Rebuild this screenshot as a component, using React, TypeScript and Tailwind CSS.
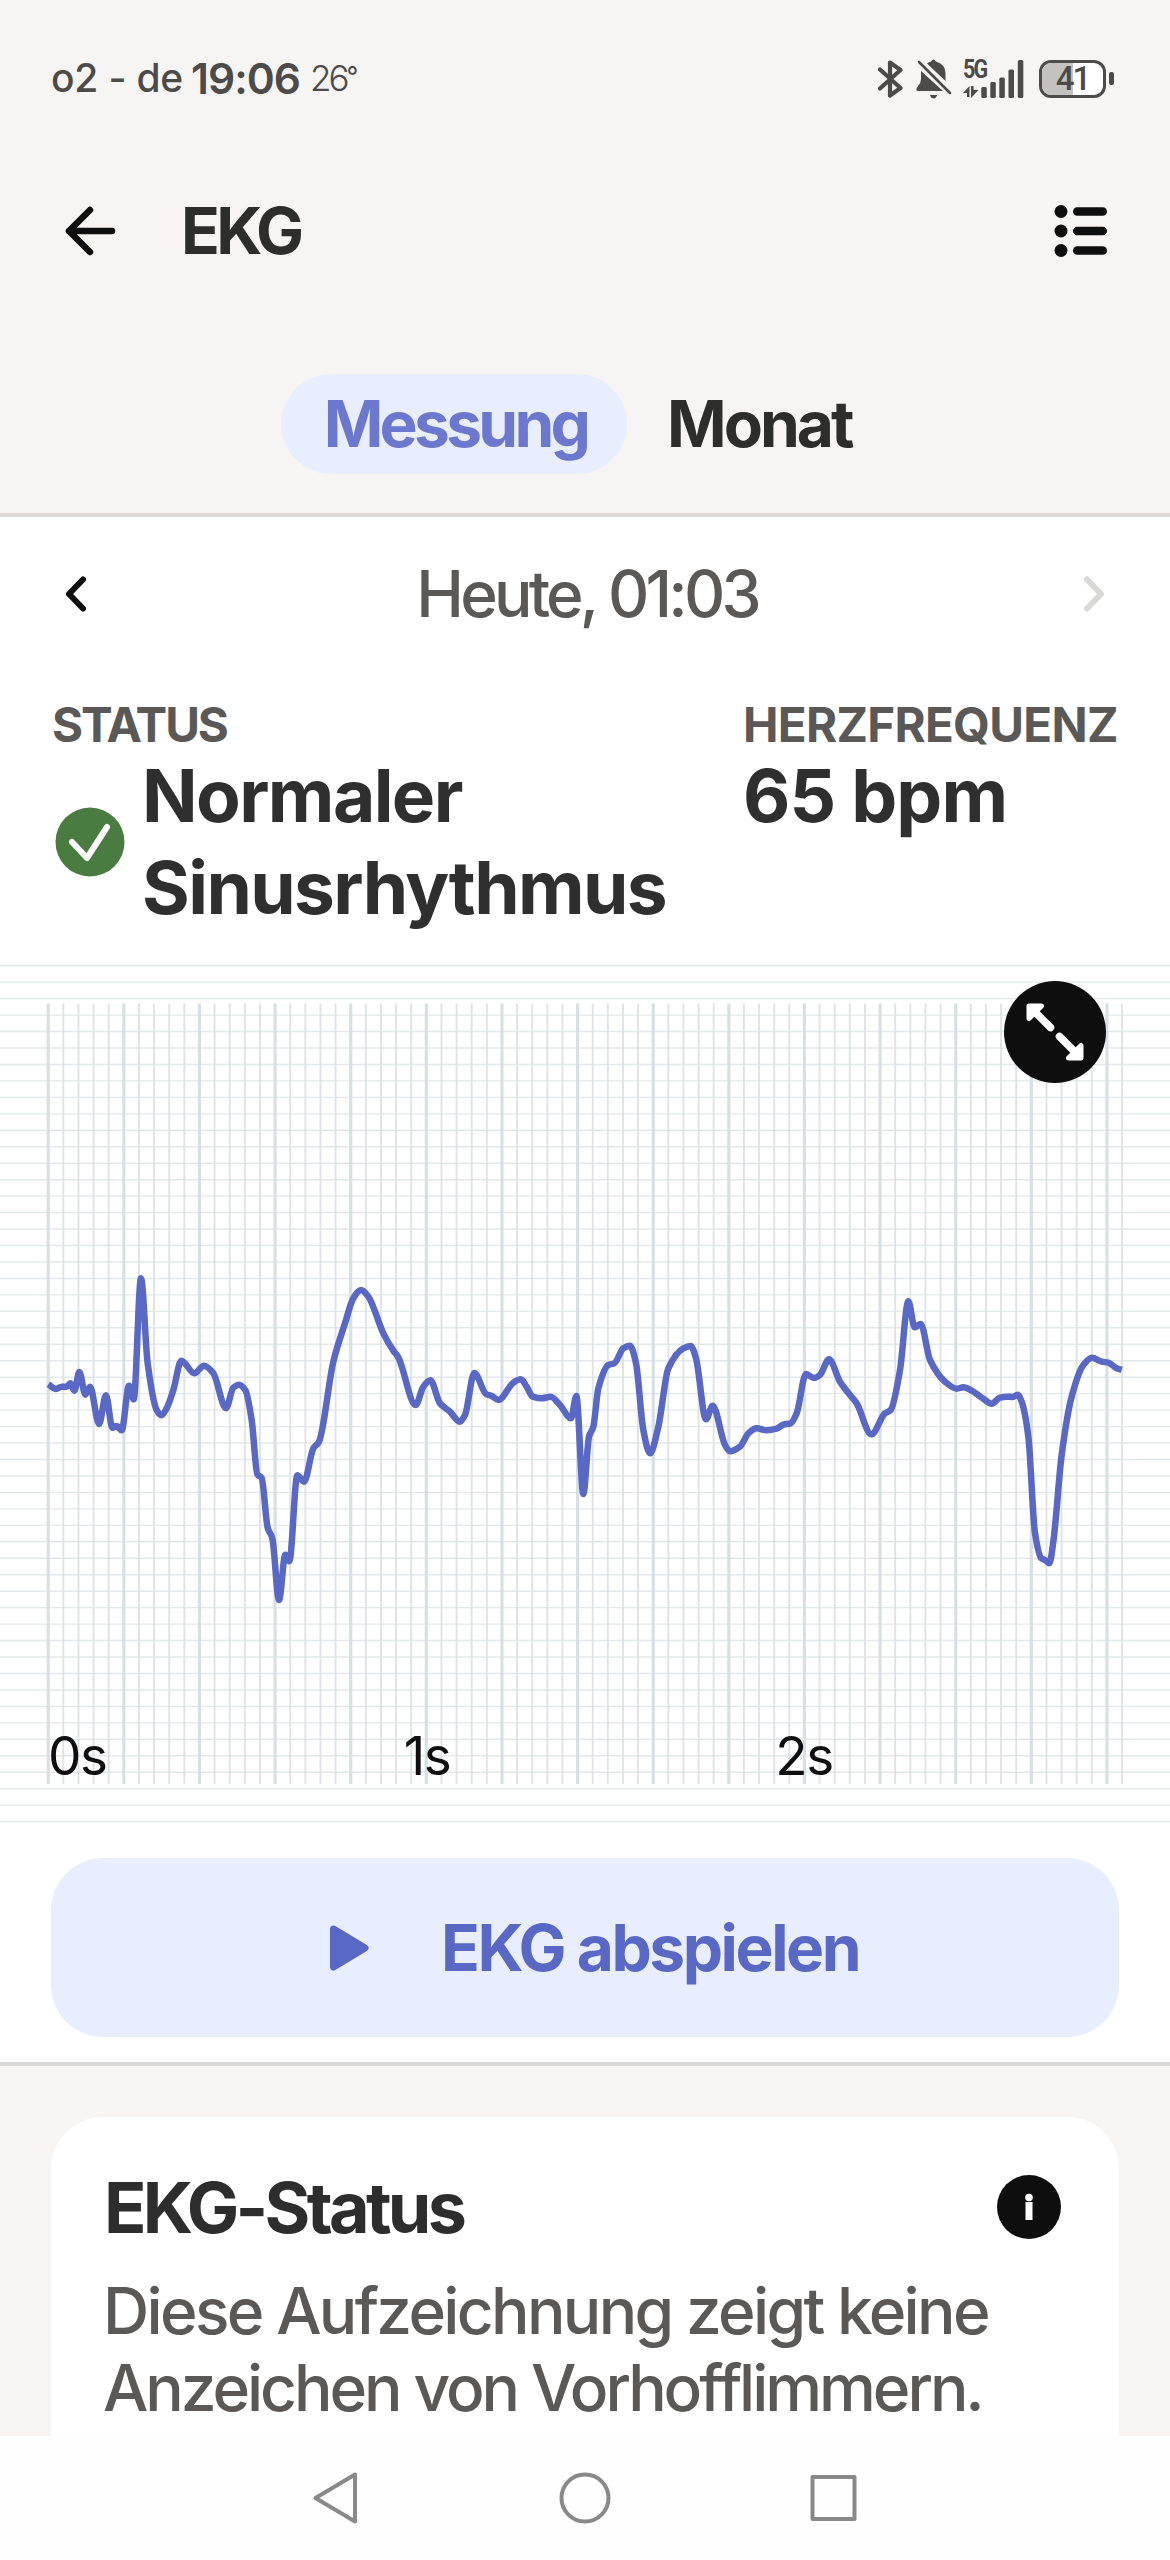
type Point = [number, number];

// ECG samples, three units per pixel, y counted from TRACE_TOP
const TRACE_TOP = 1240;
const samples: Point[] = [
  [145, 433], [168, 447], [185, 440], [200, 440], [211, 430], [223, 452], [238, 396], [256, 464],
  [270, 440], [297, 552], [318, 466], [337, 563], [350, 558], [365, 571], [387, 437], [401, 478],
  [423, 115], [443, 370], [470, 510], [484, 526], [500, 505], [520, 450], [544, 362], [583, 400],
  [612, 377], [640, 400], [678, 505], [700, 443], [717, 434], [736, 450], [755, 540], [772, 703],
  [785, 714], [803, 863], [817, 895], [837, 1080], [856, 944], [868, 964], [892, 706], [912, 725],
  [940, 625], [957, 605], [1000, 365], [1035, 250], [1060, 175], [1083, 150], [1105, 170],
  [1150, 280], [1180, 332], [1195, 352], [1247, 495], [1270, 440], [1291, 421], [1320, 490],
  [1350, 515], [1379, 545], [1395, 525], [1423, 399], [1458, 462], [1475, 468], [1495, 480],
  [1540, 428], [1562, 418], [1580, 440], [1598, 470], [1625, 475], [1652, 470], [1680, 495],
  [1713, 535], [1729, 468], [1750, 762], [1767, 590], [1780, 560], [1795, 445], [1825, 375],
  [1843, 370], [1870, 325], [1890, 317], [1908, 370], [1930, 570], [1950, 640], [1975, 560],
  [2005, 385], [2050, 325], [2072, 318], [2088, 355], [2118, 538], [2138, 497], [2175, 615],
  [2190, 634], [2220, 620], [2245, 580], [2270, 565], [2300, 571], [2330, 566], [2350, 554],
  [2372, 550], [2390, 520], [2418, 402], [2442, 414], [2460, 405], [2487, 358], [2520, 425],
  [2550, 465], [2570, 490], [2614, 583], [2655, 520], [2672, 510], [2700, 390], [2725, 184],
  [2744, 262], [2762, 252], [2790, 360], [2835, 425], [2870, 446], [2890, 442], [2915, 452],
  [2950, 476], [2975, 491], [3000, 473], [3020, 470], [3038, 471], [3053, 464], [3065, 485],
  [3085, 590], [3105, 880], [3124, 955], [3135, 960], [3148, 970], [3160, 905], [3185, 645],
  [3215, 470], [3250, 375], [3276, 353], [3305, 365], [3325, 368], [3350, 385], [3365, 390],
];

// Monotone cubic, so the curve never overshoots a peak
function smoothPath(raw: Point[]) {
  const pts = raw.map(([x, y]) => [x / 3, TRACE_TOP + y / 3]);
  const slopes = pts.slice(1).map((p, i) => (p[1] - pts[i][1]) / (p[0] - pts[i][0]));
  const tangents = pts.map((_, i) => {
    if (i === 0) return slopes[0];
    if (i === pts.length - 1) return slopes[i - 1];
    const a = slopes[i - 1];
    const b = slopes[i];
    return a * b <= 0 ? 0 : (2 * a * b) / (a + b);
  });
  return pts.slice(1).reduce((d, p, i) => {
    const q = pts[i];
    const h = (p[0] - q[0]) / 3;
    return `${d} C${q[0] + h},${q[1] + h * tangents[i]} ${p[0] - h},${p[1] - h * tangents[i + 1]} ${p[0]},${p[1]}`;
  }, `M${pts[0][0]},${pts[0][1]}`);
}

const rows = Array.from({ length: 53 }, (_, i) => 965.7 + i * 16.46);
const columns = Array.from({ length: 72 }, (_, i) => 48.2 + i * 15.125);

function StatusBar() {
  return (
    <div className="h-[157px] pl-[51px] pr-[56px] flex items-center text-[#4c4b49]">
      <span className="text-[39px] font-medium tracking-[-0.2px] w-[140px] whitespace-nowrap">o2 - de</span>
      <span className="text-[42.500px] font-semibold tracking-[-1px] w-[119px] whitespace-nowrap">19:06</span>
      <span className="text-[35px] font-light tracking-[-3px] whitespace-nowrap">26</span>
      <span className="text-[26px] font-normal -mt-[6px]">°</span>
      <div className="ml-auto flex items-center">
        <svg width="25" height="38" viewBox="0 0 25 38" fill="none" stroke="currentColor" strokeWidth="4.200" strokeLinecap="round" strokeLinejoin="round" className="mr-[13px]">
          <path d="M2 9.500 L22.500 28 L12 35.500 V2.500 L22.500 10 L2 28.500" />
        </svg>
        <svg width="36" height="40" viewBox="0 0 36 40" className="mr-[11px]">
          <path d="M5 12 L27 32 H1.5 Q-1 31 2 27 Q5 24 5 20 Z" fill="currentColor" />
          <path d="M11 4.5 Q13 3 15 2.5 Q17.500 -1.500 20 2.500 Q29 5 29.500 14 V22 Z" fill="currentColor" />
          <path d="M3 3 L34 34" stroke="currentColor" strokeWidth="2.6" strokeLinecap="round" />
          <path d="M14 36 H21 Q20 39.500 17.500 39.500 Q15 39.500 14 36 Z" fill="currentColor" />
        </svg>
        <div className="relative mr-[15px]">
          <span className="absolute -top-[3px] left-0 text-[25px] leading-[25px] font-bold tracking-[-2px] origin-left scale-x-[0.86] font-['Roboto',sans-serif]">5G</span>
          <svg width="61" height="38" viewBox="0 0 61 38" fill="currentColor">
            <path d="M0 33 L6.500 26 V37 H4 V33 Z M8 26 H10.500 V30 H15.500 L8 38 Z" />
            <rect x="18.300" y="27" width="5.500" height="11" rx="1.500" />
            <rect x="27.300" y="22" width="5.500" height="16" rx="1.500" />
            <rect x="36.300" y="17.500" width="5.500" height="20.500" rx="1.500" />
            <rect x="45.500" y="9.500" width="5.500" height="28.500" rx="1.500" />
            <rect x="54.800" y="0" width="5.500" height="38" rx="1.500" />
          </svg>
        </div>
        <div className="relative w-[67px] h-[38px] border-[3px] border-current rounded-[12px] overflow-hidden bg-white">
          <div className="h-full w-[31px] bg-[#c3c2c0]"></div>
          <span className="absolute inset-0 flex items-center justify-center text-[33px] font-medium tracking-[-2px] font-['Roboto',sans-serif]">41</span>
        </div>
        <div className="ml-[3px] w-[5px] h-[13px] rounded-[2px] bg-current"></div>
      </div>
    </div>
  );
}

function Header() {
  return (
    <div className="h-[148px] pl-[64px] pr-[62px] flex items-center">
      <svg width="52" height="52" viewBox="0 0 52 52" fill="none" stroke="#0e0e0e" strokeWidth="6.500" strokeLinecap="round" strokeLinejoin="round">
        <path d="M48 26 H5 M26 5 L5 26 L26 47" />
      </svg>
      <h1 className="ml-[65px] text-[64px] font-bold tracking-[-3.700px] text-[#2d2d2b]">EKG</h1>
      <svg width="54" height="54" viewBox="0 0 54 54" fill="#0e0e0e" className="ml-auto">
        {[7.5, 27, 46.5].map((y) => (
          <g key={y}>
            <circle cx="7" cy={y} r="6.500" />
            <rect x="19" y={y - 4.25} width="34" height="8.500" rx="4.250" />
          </g>
        ))}
      </svg>
    </div>
  );
}

function Tabs() {
  return (
    <div className="h-[212px] pt-[69px] pl-[281px] flex items-start border-b-[4px] border-[#dcdbd9] text-[64px] font-bold">
      <div className="w-[346px] h-[100px] pl-[3px] rounded-full bg-[#e8eefe] text-[#6b78ce] flex items-center justify-center tracking-[-3.700px]">Messung</div>
      <div className="h-[100px] ml-[40px] flex items-center text-[#2d2d2b] tracking-[-3px]">Monat</div>
    </div>
  );
}

function EcgChart() {
  return (
    <div className="relative mt-[30px] h-[860px]">
      <svg width="1170" height="860" viewBox="0 964 1170 860" className="block">
        {rows.map((y) => (
          <path key={y} d={`M0 ${y} H1170`} stroke="#e3e8ea" strokeWidth="1.400" />
        ))}
        {columns.map((x, i) => (
          <path
            key={x}
            d={`M${x} 1003.500 V1784`}
            stroke={i % 5 === 0 ? '#d7e0e5' : '#dfe3e6'}
            strokeWidth={i % 5 === 0 ? 3.2 : 1.9}
          />
        ))}
        <path d={smoothPath(samples)} fill="none" stroke="#5868c4" strokeWidth="6.500" strokeLinejoin="round" />
        <g className="font-['Inter',sans-serif] tracking-[-1.500px]" fontSize="53" fill="#0e0e0e">
          <text x="48" y="1775">0s</text>
          <text x="427" y="1775" textAnchor="middle">1s</text>
          <text x="804" y="1775" textAnchor="middle">2s</text>
        </g>
      </svg>
      <div className="absolute left-[1004px] top-[17px] w-[102px] h-[102px] rounded-full bg-[#0e0e0e]">
        <svg width="102" height="102" viewBox="0 0 102 102" fill="white" stroke="white" strokeLinejoin="round" strokeLinecap="round">
          <path d="M25 25 H37.500 L25 37.500 Z M77 77 H64.500 L77 64.500 Z" strokeWidth="5" />
          <path d="M30 30 L46.500 46.500 M55.500 55.500 L72 72" strokeWidth="7.500" />
        </svg>
      </div>
    </div>
  );
}

function StatusCard() {
  return (
    <div className="mx-[51px] mt-[51px] h-[319px] rounded-t-[52px] bg-white pt-[45px] pl-[52px] pr-[58px] overflow-hidden">
      <div className="h-[90px] flex items-center justify-between">
        <h2 className="ml-px text-[70px] font-bold tracking-[-3.700px] text-[#2d2d2d] whitespace-nowrap">EKG-Status</h2>
        <svg width="64" height="64" viewBox="0 0 64 64">
          <circle cx="32" cy="32" r="32" fill="#0e0e0e" />
          <circle cx="32" cy="22.500" r="3.800" fill="white" />
          <rect x="28.500" y="27" width="7" height="18" fill="white" />
        </svg>
      </div>
      <p className="mt-[20px] text-[64px] leading-[77px] font-medium tracking-[-2.650px] text-[#5a5957] whitespace-nowrap">
        Diese Aufzeichnung zeigt keine
        <br />
        <span className="tracking-[-3.050px]">Anzeichen von Vorhofflimmern.</span>
      </p>
    </div>
  );
}

function NavBar() {
  return (
    <div className="h-[124px] bg-[#fefefe] pl-[312px] pt-[35px]">
      <svg width="546" height="54" viewBox="0 0 546 54" fill="none" stroke="#898989" strokeWidth="4" strokeLinejoin="round">
        <path d="M43 3.500 V50.500 L3.500 27 Z" />
        <circle cx="273" cy="27" r="23.500" />
        <rect x="500.500" y="6" width="42" height="42" />
      </svg>
    </div>
  );
}

export default function App() {
  return (
    <div className="w-[1170px] h-[2560px] overflow-hidden bg-[#f6f5f3] font-['Inter',sans-serif]">
      <StatusBar />
      <Header />
      <Tabs />

      <div className="bg-white border-b-[4px] border-[#d9d9d7]">
        {/* Date switcher */}
        <div className="h-[154px] px-[64px] flex items-center justify-between">
          <svg width="24" height="38" viewBox="0 0 24 38" fill="none" stroke="#0e0e0e" strokeWidth="6" strokeLinecap="round" strokeLinejoin="round">
            <path d="M19 4.500 L5 19 L19 33.500" />
          </svg>
          <span className="pl-[4px] text-[64px] font-medium tracking-[-3.800px] text-[#5a5957]">Heute, 01:03</span>
          <svg width="24" height="38" viewBox="0 0 24 38" fill="none" stroke="#d8d8d7" strokeWidth="6" strokeLinecap="round" strokeLinejoin="round">
            <path d="M5 4.500 L19 19 L5 33.500" />
          </svg>
        </div>

        {/* Result summary */}
        <div className="pt-[29px] pl-[52px] flex">
          <div className="w-[691px]">
            <div className="text-[47.500px] leading-[50px] font-bold tracking-[-2.100px] text-[#5a5957]">STATUS</div>
            <div className="flex items-center">
              <svg width="70" height="70" viewBox="0 0 70 70" className="ml-[3px] mr-[17px]">
                <circle cx="35" cy="35" r="34.500" fill="#4a7c41" />
                <path d="M17 35 L32 51 L52 20" fill="none" stroke="white" strokeWidth="6" strokeLinecap="round" strokeLinejoin="round" />
              </svg>
              <div className="text-[73px] leading-[92px] font-bold tracking-[-1.600px] text-[#2f2f2f]">
                Normaler
                <br />
                Sinusrhythmus
              </div>
            </div>
          </div>
          <div>
            <div className="text-[47.500px] leading-[50px] font-bold tracking-[-0.700px] text-[#5a5957]">HERZFREQUENZ</div>
            <div className="text-[73px] leading-[92px] font-bold tracking-[-1px] text-[#2f2f2f]">65 bpm</div>
          </div>
        </div>

        <EcgChart />

        <div className="mx-[51px] mt-[34px] mb-[25px] h-[179px] rounded-[52px] bg-[#e8eefe] text-[#5a68c5] flex items-center">
          <svg width="40" height="46" viewBox="0 0 40 46" className="ml-[279px]">
            <path d="M3.500 4 L35 23 L3.500 42 Z" fill="currentColor" stroke="currentColor" strokeWidth="7" strokeLinejoin="round" />
          </svg>
          <span className="ml-[71px] text-[64px] font-bold tracking-[-2.450px] whitespace-nowrap">EKG abspielen</span>
        </div>
      </div>

      <StatusCard />
      <NavBar />
    </div>
  );
}
